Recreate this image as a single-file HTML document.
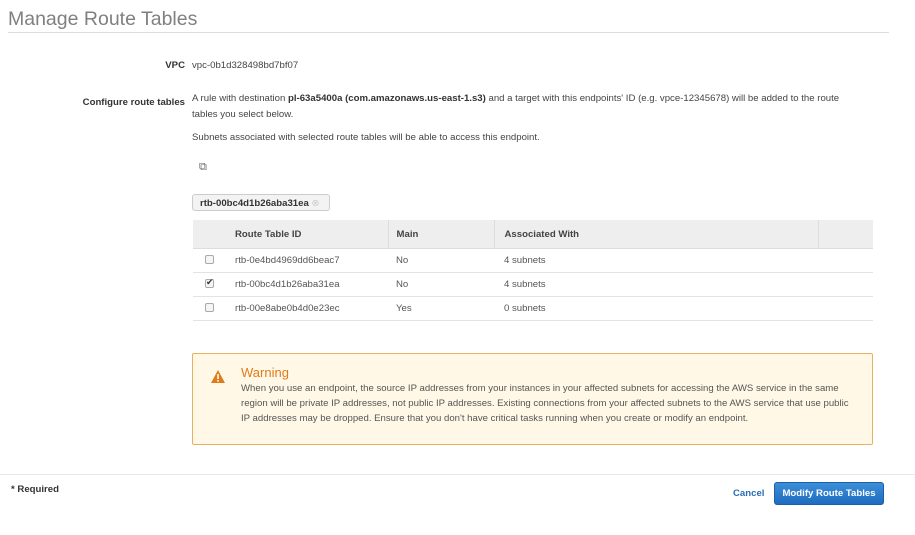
<!DOCTYPE html>
<html><head><meta charset="utf-8"><style>
*{margin:0;padding:0;box-sizing:border-box}
body{width:915px;height:535px;background:#fff;font-family:"Liberation Sans",Arial,sans-serif;font-size:9.6px;color:#444;position:relative;overflow:hidden}
.a{position:absolute;white-space:nowrap}
h1{position:absolute;left:8px;top:8px;font-size:19.5px;font-weight:normal;color:#808080}
.hr{position:absolute;left:8px;right:26px;top:32px;height:1px;background:#ddd}
.lbl{font-weight:bold;color:#333;text-align:right}
table{position:absolute;left:193px;top:220px;width:680px;border-collapse:collapse;table-layout:fixed}
th{background:#eee;height:28px;text-align:left;font-weight:bold;color:#444;font-size:9.6px;border-bottom:1px solid #ddd;padding-top:2px}
td{height:24px;border-bottom:1px solid #e3e3e3;color:#555}
.cb{display:inline-block;width:9px;height:9px;border:1px solid #aaa;border-radius:2px;background:#f5f5f5;margin-left:12px;vertical-align:middle;position:relative}
.sep{border-right:1px solid #ddd}
.warn{position:absolute;left:192px;top:353px;width:681px;height:92px;background:#fff8e6;border:1px solid #e8b060;border-radius:2px}
</style></head><body>
<h1>Manage Route Tables</h1>
<div class="hr"></div>
<div class="a lbl" style="left:100px;width:85px;top:60px">VPC</div>
<div class="a" style="left:192px;top:60px">vpc-0b1d328498bd7bf07</div>
<div class="a lbl" style="left:60px;width:125px;top:97px">Configure route tables</div>
<div class="a" style="left:192px;top:91px;line-height:16px;white-space:normal;width:670px">A rule with destination <b style="color:#333">pl-63a5400a (com.amazonaws.us-east-1.s3)</b> and a target with this endpoints' ID (e.g. vpce-12345678) will be added to the route tables you select below.</div>
<div class="a" style="left:192px;top:132px">Subnets associated with selected route tables will be able to access this endpoint.</div>
<div class="a" style="left:199px;top:161px;font-size:11px;color:#666">⧉</div>
<div class="a" style="left:192px;top:194px;height:17px;width:138px;border:1px solid #ccc;border-radius:3px;background:#f3f3f3;font-weight:bold;color:#333;padding:3px 0 0 7px">rtb-00bc4d1b26aba31ea <span style="color:#ccc;font-weight:normal">⊗</span></div>
<table>
<tr><th style="width:30px"></th><th class="sep" style="width:165px;padding-left:12px">Route Table ID</th><th class="sep" style="width:106px;padding-left:8px">Main</th><th class="sep" style="width:324px;padding-left:10px">Associated With</th><th></th></tr>
<tr><td><span class="cb"></span></td><td style="padding-left:12px">rtb-0e4bd4969dd6beac7</td><td style="padding-left:8px">No</td><td style="padding-left:10px">4 subnets</td><td></td></tr>
<tr><td><span class="cb"><span style="position:absolute;left:0;top:-3px;font-size:9px;color:#333">✔</span></span></td><td style="padding-left:12px">rtb-00bc4d1b26aba31ea</td><td style="padding-left:8px">No</td><td style="padding-left:10px">4 subnets</td><td></td></tr>
<tr><td><span class="cb"></span></td><td style="padding-left:12px">rtb-00e8abe0b4d0e23ec</td><td style="padding-left:8px">Yes</td><td style="padding-left:10px">0 subnets</td><td></td></tr>
</table>
<div class="warn">
<svg class="a" style="left:18px;top:16px" width="14" height="13" viewBox="0 0 14 13"><path d="M7 0L14 13H0Z" fill="#e07b1a"/><rect x="6.2" y="4" width="1.6" height="5" fill="#fff"/><rect x="6.2" y="10" width="1.6" height="1.6" fill="#fff"/></svg>
<div class="a" style="left:48px;top:11px;font-size:13px;color:#e07b1a">Warning</div>
<div class="a" style="left:48px;top:27px;width:610px;white-space:normal;line-height:15px;color:#555">When you use an endpoint, the source IP addresses from your instances in your affected subnets for accessing the AWS service in the same region will be private IP addresses, not public IP addresses. Existing connections from your affected subnets to the AWS service that use public IP addresses may be dropped. Ensure that you don't have critical tasks running when you create or modify an endpoint.</div>
</div>
<div class="a" style="left:0;right:0;top:474px;height:1px;background:#e8e8e8"></div>
<div class="a" style="left:11px;top:484px;font-weight:bold;color:#333">* Required</div>
<div class="a" style="left:733px;top:488px;font-weight:bold;color:#2a6db5">Cancel</div>
<div class="a" style="left:774px;top:482px;width:110px;height:23px;background:linear-gradient(#3c8ed8,#1f6cc0);border:1px solid #1a5fa8;border-radius:3px;color:#fff;font-weight:bold;text-align:center;line-height:21px">Modify Route Tables</div>
</body></html>
